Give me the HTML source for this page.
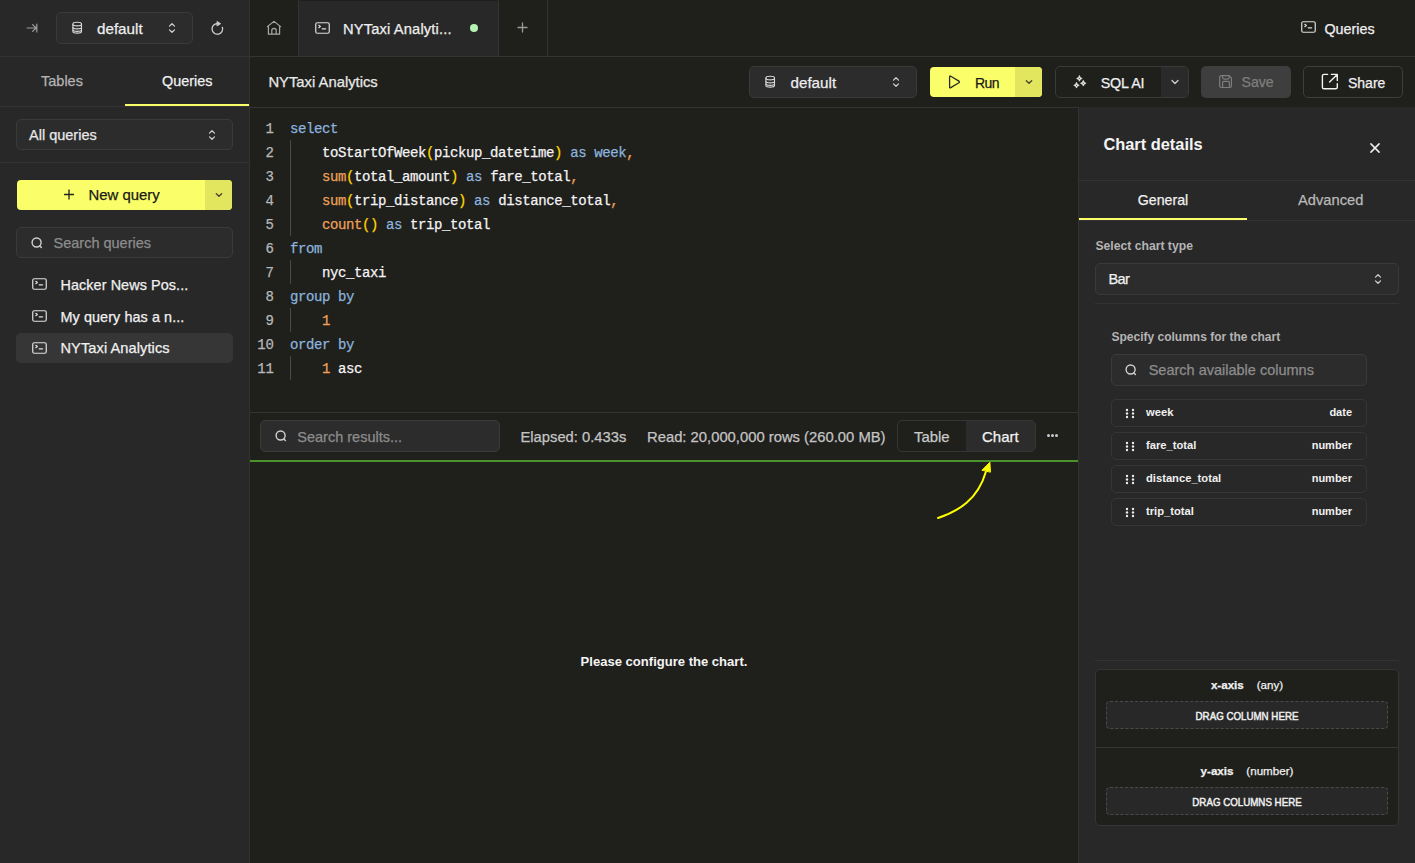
<!DOCTYPE html>
<html><head><meta charset="utf-8"><title>NYTaxi Analytics</title>
<style>
html,body{margin:0;padding:0;width:1415px;height:863px;overflow:hidden;background:#1f1f1c;font-family:"Liberation Sans", sans-serif;}
.r,.t,.i{position:absolute;}
.t{line-height:1;white-space:nowrap;-webkit-text-stroke-width:0.25px;}
</style></head><body>
<div class="r" style="left:0px;top:0px;width:249px;height:863px;background:#282828;"></div>
<div class="r" style="left:249px;top:0px;width:1166px;height:863px;background:#1f1f1c;"></div>
<div class="r" style="left:1078px;top:107px;width:337px;height:756px;background:#282828;"></div>
<div class="r" style="left:1078px;top:107px;width:1px;height:756px;background:#333333;"></div>
<div class="r" style="left:249px;top:0px;width:1px;height:863px;background:#333333;"></div>
<div class="r" style="left:0px;top:56px;width:1415px;height:1px;background:#333333;"></div>
<div class="r" style="left:250px;top:107px;width:828px;height:1px;background:#333333;"></div>
<div class="r" style="left:0px;top:106px;width:249px;height:1px;background:#333333;"></div>
<div class="r" style="left:0px;top:162px;width:249px;height:1px;background:#333333;"></div>
<svg class="i" style="left:20px;top:14px;width:30px;height:28px" viewBox="0 0 30 28" fill="none" stroke="#9e9ea2" stroke-width="1.2" stroke-linecap="round" stroke-linejoin="round"><path d="M7.2 14H16M12.6 10.6L16.2 14L12.6 17.4M16.8 10V18"/></svg>
<div class="r" style="left:56px;top:12px;width:137px;height:32px;background:#2c2c2c;border:1px solid #3a3a3a;box-sizing:border-box;border-radius:5px;"></div>
<svg class="i" style="left:70px;top:20px;width:14px;height:16px" viewBox="0 0 14 16" fill="none" stroke="#d8d8d8" stroke-width="1.1" stroke-linecap="round" stroke-linejoin="round"><path d="M2.9 4C2.9 2.6 4.8 2.3 7.2 2.3C9.6 2.3 11.5 2.6 11.5 4V11.4C11.5 12.8 9.6 13.1 7.2 13.1C4.8 13.1 2.9 12.8 2.9 11.4Z"/><path d="M2.9 4.6C2.9 5.5 4.8 5.9 7.2 5.9C9.6 5.9 11.5 5.5 11.5 4.6M2.9 7.6C2.9 8.5 4.8 8.9 7.2 8.9C9.6 8.9 11.5 8.5 11.5 7.6M2.9 10.1C2.9 11 4.8 11.4 7.2 11.4C9.6 11.4 11.5 11 11.5 10.1"/></svg>
<div class="t" style="left:97px;top:21.13px;font-size:15.2px;color:#eeeeee;font-weight:normal;">default</div>
<svg class="i" style="left:166px;top:21.2px;width:12px;height:14px" viewBox="166 21.2 12 14" fill="none" stroke="#d4d4d4" stroke-width="1.2" stroke-linecap="round" stroke-linejoin="round"><path d="M169.5 26.3L172 23.9L174.5 26.3M169.5 30.099999999999998L172 32.5L174.5 30.099999999999998"/></svg>
<svg class="i" style="left:160px;top:14px;width:70px;height:28px" viewBox="0 0 70 28" fill="none" stroke="#d4d4d4" stroke-width="1.3" stroke-linecap="round" stroke-linejoin="round"><path d="M57.2 9.6A5.3 5.3 0 1 0 62.4 13.3"/><path d="M57.3 7.6L60.6 9.7L57.3 11.8Z" fill="#d4d4d4" stroke-width="0.8"/></svg>
<div class="t" style="left:41px;top:74.23px;font-size:14.5px;color:#b4b4b4;font-weight:normal;">Tables</div>
<div class="t" style="left:162px;top:74.31px;font-size:14.4px;color:#f0f0f0;font-weight:normal;">Queries</div>
<div class="r" style="left:125px;top:104px;width:124px;height:2px;background:#faff69;"></div>
<div class="r" style="left:16px;top:119px;width:217px;height:31px;background:#2c2c2c;border:1px solid #3a3a3a;box-sizing:border-box;border-radius:5px;"></div>
<div class="t" style="left:29px;top:128.03px;font-size:14.5px;color:#e8e8e8;font-weight:normal;">All queries</div>
<svg class="i" style="left:206px;top:128px;width:12px;height:14px" viewBox="206 128 12 14" fill="none" stroke="#d4d4d4" stroke-width="1.2" stroke-linecap="round" stroke-linejoin="round"><path d="M209.5 133.1L212 130.7L214.5 133.1M209.5 136.9L212 139.3L214.5 136.9"/></svg>
<div class="r" style="left:17px;top:180px;width:215px;height:30px;background:#faff69;border-radius:4px;"></div>
<div class="r" style="left:205px;top:180px;width:27px;height:30px;background:#e2e65e;border-radius:0 4px 4px 0;"></div>
<svg class="i" style="left:64px;top:189px;width:10px;height:11px" viewBox="0 0 10 11" fill="none" stroke="#222" stroke-width="1.3" stroke-linecap="round" stroke-linejoin="round"><path d="M5 1v9M0.5 5.5h9"/></svg>
<div class="t" style="left:88.5px;top:188.39px;font-size:14.9px;color:#1a1a1a;font-weight:normal;">New query</div>
<svg class="i" style="left:215px;top:192px;width:8px;height:6px" viewBox="0 0 8 6" fill="none" stroke="#45452f" stroke-width="1.3" stroke-linecap="round" stroke-linejoin="round"><path d="M1.3 1.7l2.7 2.6 2.7-2.6"/></svg>
<div class="r" style="left:16px;top:227px;width:217px;height:31px;background:#2c2c2c;border:1px solid #3a3a3a;box-sizing:border-box;border-radius:5px;"></div>
<svg class="i" style="left:31px;top:237px;width:12px;height:12px" viewBox="0 0 12 12" fill="none" stroke="#d0d0d0" stroke-width="1.4" stroke-linecap="round" stroke-linejoin="round"><circle cx="5.6" cy="5.5" r="4.5"/><path d="M8.9 8.9L10.4 10.4"/></svg>
<div class="t" style="left:53.5px;top:236.13px;font-size:14.5px;color:#8c8c8c;font-weight:normal;">Search queries</div>
<div class="r" style="left:16px;top:333px;width:217px;height:30px;background:#363636;border-radius:5px;"></div>
<svg class="i" style="left:32px;top:278.2px;width:15px;height:12px" viewBox="0 0 15 12" fill="none" stroke="#e0e0e0" stroke-width="1.2" stroke-linecap="round" stroke-linejoin="round"><rect x="0.75" y="0.75" width="13.5" height="10.5" rx="1.5"/><path d="M3.8 3.3L5.4 4.5L3.8 5.7M7.2 6.8H10.6"/></svg>
<div class="t" style="left:60.5px;top:277.51px;font-size:14.4px;color:#f0f0f0;font-weight:normal;letter-spacing:0.08px;">Hacker News Pos...</div>
<svg class="i" style="left:32px;top:310.2px;width:15px;height:12px" viewBox="0 0 15 12" fill="none" stroke="#e0e0e0" stroke-width="1.2" stroke-linecap="round" stroke-linejoin="round"><rect x="0.75" y="0.75" width="13.5" height="10.5" rx="1.5"/><path d="M3.8 3.3L5.4 4.5L3.8 5.7M7.2 6.8H10.6"/></svg>
<div class="t" style="left:60.5px;top:309.51px;font-size:14.4px;color:#f0f0f0;font-weight:normal;letter-spacing:0.08px;">My query has a n...</div>
<svg class="i" style="left:32px;top:342.2px;width:15px;height:12px" viewBox="0 0 15 12" fill="none" stroke="#e0e0e0" stroke-width="1.2" stroke-linecap="round" stroke-linejoin="round"><rect x="0.75" y="0.75" width="13.5" height="10.5" rx="1.5"/><path d="M3.8 3.3L5.4 4.5L3.8 5.7M7.2 6.8H10.6"/></svg>
<div class="t" style="left:60.5px;top:341.34px;font-size:14.6px;color:#f0f0f0;font-weight:normal;letter-spacing:0.08px;">NYTaxi Analytics</div>
<div class="r" style="left:298px;top:0px;width:1px;height:56px;background:#333333;"></div>
<div class="r" style="left:299px;top:1px;width:199px;height:55px;background:#282828;"></div>
<div class="r" style="left:498px;top:0px;width:1px;height:56px;background:#333333;"></div>
<div class="r" style="left:547px;top:0px;width:1px;height:56px;background:#333333;"></div>
<svg class="i" style="left:260px;top:14px;width:30px;height:28px" viewBox="0 0 30 28" fill="none" stroke="#a8a8a8" stroke-width="1.2" stroke-linecap="round" stroke-linejoin="round"><path d="M7.4 12.6L14 7.4L20.6 12.6M8.4 11.8V20.2H19.6V11.8M11.8 20.2V16.5A2.2 2.2 0 0 1 16.2 16.5V20.2"/></svg>
<svg class="i" style="left:315px;top:22px;width:16px;height:13px" viewBox="0 0 16 13" fill="none" stroke="#dedede" stroke-width="1.2" stroke-linecap="round" stroke-linejoin="round"><rect x="0.75" y="0.75" width="13.5" height="10.5" rx="1.5"/><path d="M3.8 3.3L5.4 4.5L3.8 5.7M7.2 6.8H10.6"/></svg>
<div class="t" style="left:343px;top:21.96px;font-size:14.7px;color:#eeeeee;font-weight:normal;letter-spacing:0.15px;">NYTaxi Analyti...</div>
<div class="r" style="left:470px;top:24px;width:8px;height:8px;background:#b7f2b5;border-radius:4px;"></div>
<svg class="i" style="left:517px;top:22px;width:11px;height:11px" viewBox="0 0 11 11" fill="none" stroke="#9a9a9a" stroke-width="1.3" stroke-linecap="round" stroke-linejoin="round"><path d="M5.5 1v9M1 5.5h9"/></svg>
<svg class="i" style="left:1301px;top:21px;width:16px;height:13px" viewBox="0 0 16 13" fill="none" stroke="#dedede" stroke-width="1.2" stroke-linecap="round" stroke-linejoin="round"><rect x="0.75" y="0.75" width="13.5" height="10.5" rx="1.5"/><path d="M3.8 3.3L5.4 4.5L3.8 5.7M7.2 6.8H10.6"/></svg>
<div class="t" style="left:1324.5px;top:22.10px;font-size:14.3px;color:#f0f0f0;font-weight:normal;">Queries</div>
<div class="t" style="left:268.4px;top:75.27px;font-size:14.8px;color:#e8e8e8;font-weight:normal;">NYTaxi Analytics</div>
<div class="r" style="left:749px;top:66px;width:168px;height:32px;background:#2c2c2c;border:1px solid #3a3a3a;box-sizing:border-box;border-radius:5px;"></div>
<svg class="i" style="left:763px;top:74px;width:14px;height:16px" viewBox="0 0 14 16" fill="none" stroke="#d8d8d8" stroke-width="1.1" stroke-linecap="round" stroke-linejoin="round"><path d="M2.9 4C2.9 2.6 4.8 2.3 7.2 2.3C9.6 2.3 11.5 2.6 11.5 4V11.4C11.5 12.8 9.6 13.1 7.2 13.1C4.8 13.1 2.9 12.8 2.9 11.4Z"/><path d="M2.9 4.6C2.9 5.5 4.8 5.9 7.2 5.9C9.6 5.9 11.5 5.5 11.5 4.6M2.9 7.6C2.9 8.5 4.8 8.9 7.2 8.9C9.6 8.9 11.5 8.5 11.5 7.6M2.9 10.1C2.9 11 4.8 11.4 7.2 11.4C9.6 11.4 11.5 11 11.5 10.1"/></svg>
<div class="t" style="left:790.5px;top:74.93px;font-size:15.2px;color:#eeeeee;font-weight:normal;">default</div>
<svg class="i" style="left:890.1px;top:75px;width:12px;height:14px" viewBox="890.1 75 12 14" fill="none" stroke="#d4d4d4" stroke-width="1.2" stroke-linecap="round" stroke-linejoin="round"><path d="M893.6 80.1L896.1 77.7L898.6 80.1M893.6 83.9L896.1 86.3L898.6 83.9"/></svg>
<div class="r" style="left:930px;top:67px;width:112px;height:30px;background:#faff69;border-radius:4px;"></div>
<div class="r" style="left:1015px;top:67px;width:27px;height:30px;background:#e2e65e;border-radius:0 4px 4px 0;"></div>
<svg class="i" style="left:948px;top:74px;width:14px;height:16px" viewBox="0 0 14 16" fill="none" stroke="#2a2a22" stroke-width="1.3" stroke-linecap="round" stroke-linejoin="round"><path d="M1.6 2.8Q1.6 1.5 2.8 2.2L10.9 7.1Q11.9 7.9 10.9 8.7L2.8 13.6Q1.6 14.3 1.6 13Z"/></svg>
<div class="t" style="left:975px;top:76.15px;font-size:14px;color:#1a1a1a;font-weight:normal;letter-spacing:-0.6px;">Run</div>
<svg class="i" style="left:1025px;top:79px;width:8px;height:6px" viewBox="0 0 8 6" fill="none" stroke="#45452f" stroke-width="1.3" stroke-linecap="round" stroke-linejoin="round"><path d="M1.3 1.7l2.7 2.6 2.7-2.6"/></svg>
<div class="r" style="left:1055px;top:66px;width:134px;height:32px;background:#1f1f1c;border:1px solid #3a3a3a;box-sizing:border-box;border-radius:5px;"></div>
<div class="r" style="left:1161px;top:67px;width:27px;height:30px;background:#2a2a2a;border-radius:0 4px 4px 0;"></div>
<svg class="i" style="left:1068px;top:70px;width:24px;height:24px" viewBox="0 0 24 24" fill="none" stroke="#e8e8e8" stroke-width="0.6" stroke-linecap="round" stroke-linejoin="round"><path d="M11.4 5.7Q12.0 7.9 14.2 8.5Q12.0 9.1 11.4 11.3Q10.8 9.1 8.600000000000001 8.5Q10.8 7.9 11.4 5.7Z" fill="#e8e8e8"/><circle cx="11.4" cy="8.5" r="0.5" fill="#1f1f1c" stroke="none"/><path d="M8.5 12.5Q9.1 14.700000000000001 11.3 15.3Q9.1 15.9 8.5 18.1Q7.9 15.9 5.7 15.3Q7.9 14.700000000000001 8.5 12.5Z" fill="#e8e8e8"/><circle cx="8.5" cy="15.3" r="0.5" fill="#1f1f1c" stroke="none"/><path d="M15.3 10.5Q15.9 12.700000000000001 18.1 13.3Q15.9 13.9 15.3 16.1Q14.700000000000001 13.9 12.5 13.3Q14.700000000000001 12.700000000000001 15.3 10.5Z" fill="#e8e8e8"/><circle cx="15.3" cy="13.3" r="0.5" fill="#1f1f1c" stroke="none"/></svg>
<div class="t" style="left:1100.7px;top:76.00px;font-size:14.3px;color:#f0f0f0;font-weight:normal;letter-spacing:-0.2px;">SQL AI</div>
<svg class="i" style="left:1171px;top:79px;width:8px;height:6px" viewBox="0 0 8 6" fill="none" stroke="#d0d0d0" stroke-width="1.3" stroke-linecap="round" stroke-linejoin="round"><path d="M1 1.5l3 3 3-3"/></svg>
<div class="r" style="left:1201px;top:66px;width:90px;height:32px;background:#3e3e3e;border-radius:5px;"></div>
<svg class="i" style="left:1212px;top:70px;width:30px;height:24px" viewBox="0 0 30 24" fill="none" stroke="#7c7c7c" stroke-width="1.2" stroke-linecap="round" stroke-linejoin="round"><path d="M9.2 5.6H17L19.4 8V16A1.5 1.5 0 0 1 17.9 17.5H9.2A1.5 1.5 0 0 1 7.7 16V7.1A1.5 1.5 0 0 1 9.2 5.6Z"/><path d="M10.6 5.6V7.6A1.5 1.5 0 0 0 12.1 9.1H15.6A1.5 1.5 0 0 0 17.1 7.6V5.6M10.6 17.5V12.4A1 1 0 0 1 11.6 11.4H16.4A1 1 0 0 1 17.4 12.4V17.5"/></svg>
<div class="t" style="left:1241.6px;top:75.18px;font-size:14.2px;color:#7e7e7e;font-weight:normal;letter-spacing:-0.1px;">Save</div>
<div class="r" style="left:1303px;top:66px;width:100px;height:32px;background:#1f1f1c;border:1px solid #3e3e3e;box-sizing:border-box;border-radius:5px;"></div>
<svg class="i" style="left:1321px;top:73px;width:18px;height:17px" viewBox="0 0 18 17" fill="none" stroke="#f2f2f2" stroke-width="1.4" stroke-linecap="round" stroke-linejoin="round"><path d="M6.6 1.4H3A1.6 1.6 0 0 0 1.4 3V14.2A1.6 1.6 0 0 0 3 15.8H14.7A1.6 1.6 0 0 0 16.3 14.2V10.6M10.4 1.4H16.3V7.6M16 1.7L8.6 9.1"/></svg>
<div class="t" style="left:1348px;top:76.15px;font-size:14px;color:#f0f0f0;font-weight:normal;">Share</div>
<div class="t" style="right:1141px;top:122.15px;font-size:14px;color:#b8b8b8;font-weight:normal;font-family:'Liberation Mono', monospace;">1</div>
<div class="t" style="left:290px;top:122.15px;font-size:14px;color:#f4f4f4;font-weight:normal;letter-spacing:-0.4px;font-family:'Liberation Mono', monospace;"><span style="color:#8cb4dc">select</span></div>
<div class="t" style="right:1141px;top:146.15px;font-size:14px;color:#b8b8b8;font-weight:normal;font-family:'Liberation Mono', monospace;">2</div>
<div class="t" style="left:290px;top:146.15px;font-size:14px;color:#f4f4f4;font-weight:normal;letter-spacing:-0.4px;font-family:'Liberation Mono', monospace;"><span style="color:#f4f4f4">&nbsp;&nbsp;&nbsp;&nbsp;</span><span style="color:#f4f4f4">toStartOfWeek</span><span style="color:#ffd500">(</span><span style="color:#f4f4f4">pickup_datetime</span><span style="color:#ffd500">)</span><span style="color:#f4f4f4">&nbsp;</span><span style="color:#8cb4dc">as</span><span style="color:#f4f4f4">&nbsp;</span><span style="color:#8cb4dc">week</span><span style="color:#eea15a">,</span></div>
<div class="t" style="right:1141px;top:170.15px;font-size:14px;color:#b8b8b8;font-weight:normal;font-family:'Liberation Mono', monospace;">3</div>
<div class="t" style="left:290px;top:170.15px;font-size:14px;color:#f4f4f4;font-weight:normal;letter-spacing:-0.4px;font-family:'Liberation Mono', monospace;"><span style="color:#f4f4f4">&nbsp;&nbsp;&nbsp;&nbsp;</span><span style="color:#eea15a">sum</span><span style="color:#ffd500">(</span><span style="color:#f4f4f4">total_amount</span><span style="color:#ffd500">)</span><span style="color:#f4f4f4">&nbsp;</span><span style="color:#8cb4dc">as</span><span style="color:#f4f4f4">&nbsp;fare_total</span><span style="color:#eea15a">,</span></div>
<div class="t" style="right:1141px;top:194.15px;font-size:14px;color:#b8b8b8;font-weight:normal;font-family:'Liberation Mono', monospace;">4</div>
<div class="t" style="left:290px;top:194.15px;font-size:14px;color:#f4f4f4;font-weight:normal;letter-spacing:-0.4px;font-family:'Liberation Mono', monospace;"><span style="color:#f4f4f4">&nbsp;&nbsp;&nbsp;&nbsp;</span><span style="color:#eea15a">sum</span><span style="color:#ffd500">(</span><span style="color:#f4f4f4">trip_distance</span><span style="color:#ffd500">)</span><span style="color:#f4f4f4">&nbsp;</span><span style="color:#8cb4dc">as</span><span style="color:#f4f4f4">&nbsp;distance_total</span><span style="color:#eea15a">,</span></div>
<div class="t" style="right:1141px;top:218.15px;font-size:14px;color:#b8b8b8;font-weight:normal;font-family:'Liberation Mono', monospace;">5</div>
<div class="t" style="left:290px;top:218.15px;font-size:14px;color:#f4f4f4;font-weight:normal;letter-spacing:-0.4px;font-family:'Liberation Mono', monospace;"><span style="color:#f4f4f4">&nbsp;&nbsp;&nbsp;&nbsp;</span><span style="color:#eea15a">count</span><span style="color:#ffd500">()</span><span style="color:#f4f4f4">&nbsp;</span><span style="color:#8cb4dc">as</span><span style="color:#f4f4f4">&nbsp;trip_total</span></div>
<div class="t" style="right:1141px;top:242.15px;font-size:14px;color:#b8b8b8;font-weight:normal;font-family:'Liberation Mono', monospace;">6</div>
<div class="t" style="left:290px;top:242.15px;font-size:14px;color:#f4f4f4;font-weight:normal;letter-spacing:-0.4px;font-family:'Liberation Mono', monospace;"><span style="color:#8cb4dc">from</span></div>
<div class="t" style="right:1141px;top:266.15px;font-size:14px;color:#b8b8b8;font-weight:normal;font-family:'Liberation Mono', monospace;">7</div>
<div class="t" style="left:290px;top:266.15px;font-size:14px;color:#f4f4f4;font-weight:normal;letter-spacing:-0.4px;font-family:'Liberation Mono', monospace;"><span style="color:#f4f4f4">&nbsp;&nbsp;&nbsp;&nbsp;nyc_taxi</span></div>
<div class="t" style="right:1141px;top:290.15px;font-size:14px;color:#b8b8b8;font-weight:normal;font-family:'Liberation Mono', monospace;">8</div>
<div class="t" style="left:290px;top:290.15px;font-size:14px;color:#f4f4f4;font-weight:normal;letter-spacing:-0.4px;font-family:'Liberation Mono', monospace;"><span style="color:#8cb4dc">group&nbsp;by</span></div>
<div class="t" style="right:1141px;top:314.15px;font-size:14px;color:#b8b8b8;font-weight:normal;font-family:'Liberation Mono', monospace;">9</div>
<div class="t" style="left:290px;top:314.15px;font-size:14px;color:#f4f4f4;font-weight:normal;letter-spacing:-0.4px;font-family:'Liberation Mono', monospace;"><span style="color:#f4f4f4">&nbsp;&nbsp;&nbsp;&nbsp;</span><span style="color:#eea15a">1</span></div>
<div class="t" style="right:1141px;top:338.15px;font-size:14px;color:#b8b8b8;font-weight:normal;font-family:'Liberation Mono', monospace;">10</div>
<div class="t" style="left:290px;top:338.15px;font-size:14px;color:#f4f4f4;font-weight:normal;letter-spacing:-0.4px;font-family:'Liberation Mono', monospace;"><span style="color:#8cb4dc">order&nbsp;by</span></div>
<div class="t" style="right:1141px;top:362.15px;font-size:14px;color:#b8b8b8;font-weight:normal;font-family:'Liberation Mono', monospace;">11</div>
<div class="t" style="left:290px;top:362.15px;font-size:14px;color:#f4f4f4;font-weight:normal;letter-spacing:-0.4px;font-family:'Liberation Mono', monospace;"><span style="color:#f4f4f4">&nbsp;&nbsp;&nbsp;&nbsp;</span><span style="color:#eea15a">1</span><span style="color:#f4f4f4">&nbsp;asc</span></div>
<div class="r" style="left:290px;top:140px;width:1px;height:96px;background:#4a4a4a;"></div>
<div class="r" style="left:290px;top:260px;width:1px;height:24px;background:#4a4a4a;"></div>
<div class="r" style="left:290px;top:308px;width:1px;height:24px;background:#4a4a4a;"></div>
<div class="r" style="left:290px;top:356px;width:1px;height:24px;background:#4a4a4a;"></div>
<div class="r" style="left:250px;top:412px;width:828px;height:1px;background:#333333;"></div>
<div class="r" style="left:260px;top:420px;width:240px;height:32px;background:#2c2c2c;border:1px solid #3a3a3a;box-sizing:border-box;border-radius:5px;"></div>
<svg class="i" style="left:275px;top:430px;width:12px;height:12px" viewBox="0 0 12 12" fill="none" stroke="#d0d0d0" stroke-width="1.4" stroke-linecap="round" stroke-linejoin="round"><circle cx="5.6" cy="5.5" r="4.5"/><path d="M8.9 8.9L10.4 10.4"/></svg>
<div class="t" style="left:297.3px;top:430.13px;font-size:14.5px;color:#8c8c8c;font-weight:normal;">Search results...</div>
<div class="t" style="left:520.5px;top:430.11px;font-size:14.75px;color:#c4c4c4;font-weight:normal;">Elapsed: 0.433s</div>
<div class="t" style="left:647px;top:430.07px;font-size:14.8px;color:#c4c4c4;font-weight:normal;">Read: 20,000,000 rows (260.00 MB)</div>
<div class="r" style="left:897px;top:420px;width:139px;height:32px;background:#1f1f1c;border:1px solid #363636;box-sizing:border-box;border-radius:5px;"></div>
<div class="r" style="left:966px;top:421px;width:69px;height:30px;background:#2c2c2c;border-radius:0 4px 4px 0;"></div>
<div class="t" style="left:914px;top:429.69px;font-size:14.9px;color:#c8c8c8;font-weight:normal;">Table</div>
<div class="t" style="left:982px;top:428.90px;font-size:15px;color:#f2f2f2;font-weight:normal;">Chart</div>
<div class="r" style="left:1047.0px;top:434.3px;width:3.2000000000000455px;height:3.1999999999999886px;background:#c8c8d0;border-radius:1.6px;"></div>
<div class="r" style="left:1050.8px;top:434.3px;width:3.2000000000000455px;height:3.1999999999999886px;background:#c8c8d0;border-radius:1.6px;"></div>
<div class="r" style="left:1054.6px;top:434.3px;width:3.2000000000000455px;height:3.1999999999999886px;background:#c8c8d0;border-radius:1.6px;"></div>
<div class="r" style="left:250px;top:460px;width:828px;height:2px;background:#4a922b;"></div>
<svg class="i" style="left:930px;top:455px;width:70px;height:70px" viewBox="930 455 70 70" fill="none" stroke="#ffff00" stroke-width="2" stroke-linecap="round"><path d="M938 518C959 511 978 499 985.8 472"/><path d="M982.2 470L989.9 462.3L990.4 471.8Z" fill="#ffff00" stroke-width="1"/></svg>
<div class="t" style="left:464px;width:400px;text-align:center;top:655.05px;font-size:13.05px;color:#f4f4f4;font-weight:bold;-webkit-text-stroke-width:0;">Please configure the chart.</div>
<div class="t" style="left:1103.4px;top:136.32px;font-size:16.4px;color:#f4f4f4;font-weight:bold;-webkit-text-stroke-width:0;">Chart details</div>
<svg class="i" style="left:1369px;top:142px;width:12px;height:12px" viewBox="0 0 12 12" fill="none" stroke="#f0f0f0" stroke-width="1.5" stroke-linecap="round" stroke-linejoin="round"><path d="M1.9 1.9L10.1 10.1M10.1 1.9L1.9 10.1"/></svg>
<div class="r" style="left:1078px;top:180px;width:337px;height:1px;background:#333333;"></div>
<div class="t" style="left:1137.8px;top:192.98px;font-size:14.2px;color:#f0f0f0;font-weight:normal;">General</div>
<div class="t" style="left:1298px;top:193.16px;font-size:14.7px;color:#b8b8b8;font-weight:normal;">Advanced</div>
<div class="r" style="left:1078px;top:220px;width:337px;height:1px;background:#333333;"></div>
<div class="r" style="left:1079px;top:218px;width:168px;height:2px;background:#faff69;"></div>
<div class="t" style="left:1095.4px;top:239.97px;font-size:12.2px;color:#b4b4b4;font-weight:bold;-webkit-text-stroke-width:0;">Select chart type</div>
<div class="r" style="left:1095px;top:263px;width:304px;height:32px;background:#2c2c2c;border:1px solid #3a3a3a;box-sizing:border-box;border-radius:5px;"></div>
<div class="t" style="left:1108.4px;top:272.04px;font-size:14.6px;color:#f0f0f0;font-weight:normal;letter-spacing:-0.6px;">Bar</div>
<svg class="i" style="left:1371.8px;top:272.1px;width:12px;height:14px" viewBox="1371.8 272.1 12 14" fill="none" stroke="#d4d4d4" stroke-width="1.2" stroke-linecap="round" stroke-linejoin="round"><path d="M1375.3 277.20000000000005L1377.8 274.8L1380.3 277.20000000000005M1375.3 281.0L1377.8 283.40000000000003L1380.3 281.0"/></svg>
<div class="r" style="left:1095px;top:303px;width:304px;height:1px;background:#333333;"></div>
<div class="t" style="left:1111.5px;top:331.34px;font-size:12px;color:#b4b4b4;font-weight:bold;-webkit-text-stroke-width:0;">Specify columns for the chart</div>
<div class="r" style="left:1111px;top:354px;width:256px;height:32px;background:#2c2c2c;border:1px solid #3a3a3a;box-sizing:border-box;border-radius:5px;"></div>
<svg class="i" style="left:1125px;top:364px;width:12px;height:12px" viewBox="0 0 12 12" fill="none" stroke="#d0d0d0" stroke-width="1.4" stroke-linecap="round" stroke-linejoin="round"><circle cx="5.6" cy="5.5" r="4.5"/><path d="M8.9 8.9L10.4 10.4"/></svg>
<div class="t" style="left:1148.7px;top:363.03px;font-size:14.5px;color:#8c8c8c;font-weight:normal;">Search available columns</div>
<div class="r" style="left:1111px;top:399px;width:256px;height:28px;background:#282828;border:1px solid #363636;box-sizing:border-box;border-radius:5px;"></div>
<svg class="i" style="left:1125px;top:407.5px;width:10px;height:11px" viewBox="0 0 10 11" fill="#ececec"><circle cx="2" cy="2.0" r="1.2"/><circle cx="8" cy="2.0" r="1.2"/><circle cx="2" cy="5.5" r="1.2"/><circle cx="8" cy="5.5" r="1.2"/><circle cx="2" cy="9.0" r="1.2"/><circle cx="8" cy="9.0" r="1.2"/></svg>
<div class="t" style="left:1146px;top:406.82px;font-size:11.2px;color:#f0f0f0;font-weight:bold;-webkit-text-stroke-width:0;">week</div>
<div class="t" style="right:63px;top:406.99px;font-size:11px;color:#f0f0f0;font-weight:bold;-webkit-text-stroke-width:0;">date</div>
<div class="r" style="left:1111px;top:432px;width:256px;height:28px;background:#282828;border:1px solid #363636;box-sizing:border-box;border-radius:5px;"></div>
<svg class="i" style="left:1125px;top:440.5px;width:10px;height:11px" viewBox="0 0 10 11" fill="#ececec"><circle cx="2" cy="2.0" r="1.2"/><circle cx="8" cy="2.0" r="1.2"/><circle cx="2" cy="5.5" r="1.2"/><circle cx="8" cy="5.5" r="1.2"/><circle cx="2" cy="9.0" r="1.2"/><circle cx="8" cy="9.0" r="1.2"/></svg>
<div class="t" style="left:1146px;top:439.82px;font-size:11.2px;color:#f0f0f0;font-weight:bold;-webkit-text-stroke-width:0;">fare_total</div>
<div class="t" style="right:63px;top:439.99px;font-size:11px;color:#f0f0f0;font-weight:bold;-webkit-text-stroke-width:0;">number</div>
<div class="r" style="left:1111px;top:465px;width:256px;height:28px;background:#282828;border:1px solid #363636;box-sizing:border-box;border-radius:5px;"></div>
<svg class="i" style="left:1125px;top:473.5px;width:10px;height:11px" viewBox="0 0 10 11" fill="#ececec"><circle cx="2" cy="2.0" r="1.2"/><circle cx="8" cy="2.0" r="1.2"/><circle cx="2" cy="5.5" r="1.2"/><circle cx="8" cy="5.5" r="1.2"/><circle cx="2" cy="9.0" r="1.2"/><circle cx="8" cy="9.0" r="1.2"/></svg>
<div class="t" style="left:1146px;top:472.82px;font-size:11.2px;color:#f0f0f0;font-weight:bold;-webkit-text-stroke-width:0;">distance_total</div>
<div class="t" style="right:63px;top:472.99px;font-size:11px;color:#f0f0f0;font-weight:bold;-webkit-text-stroke-width:0;">number</div>
<div class="r" style="left:1111px;top:498px;width:256px;height:28px;background:#282828;border:1px solid #363636;box-sizing:border-box;border-radius:5px;"></div>
<svg class="i" style="left:1125px;top:506.5px;width:10px;height:11px" viewBox="0 0 10 11" fill="#ececec"><circle cx="2" cy="2.0" r="1.2"/><circle cx="8" cy="2.0" r="1.2"/><circle cx="2" cy="5.5" r="1.2"/><circle cx="8" cy="5.5" r="1.2"/><circle cx="2" cy="9.0" r="1.2"/><circle cx="8" cy="9.0" r="1.2"/></svg>
<div class="t" style="left:1146px;top:505.82px;font-size:11.2px;color:#f0f0f0;font-weight:bold;-webkit-text-stroke-width:0;">trip_total</div>
<div class="t" style="right:63px;top:505.99px;font-size:11px;color:#f0f0f0;font-weight:bold;-webkit-text-stroke-width:0;">number</div>
<div class="r" style="left:1095px;top:660px;width:304px;height:1px;background:#333333;"></div>
<div class="r" style="left:1095px;top:669px;width:304px;height:157px;background:#1f1f1c;border:1px solid #353535;box-sizing:border-box;border-radius:5px;"></div>
<div class="r" style="left:1096px;top:747px;width:302px;height:1px;background:#353535;"></div>
<div class="t" style="left:1096px;top:679px;width:302px;text-align:center;font-size:11.6px;line-height:12px;color:#f0f0f0"><b>x-axis</b>&nbsp;&nbsp;&nbsp;&nbsp;(any)</div>
<div class="r" style="left:1106px;top:701px;width:282px;height:28px;background:#282828;border-radius:4px;border:1px dashed #4a4a4a;box-sizing:border-box;"></div>
<div class="t" style="left:1106px;top:709px;width:282px;text-align:center;font-size:10.6px;line-height:14px;color:#f0f0f0;-webkit-text-stroke-width:0.45px;transform:scaleX(0.92)">DRAG COLUMN HERE</div>
<div class="t" style="left:1096px;top:765px;width:302px;text-align:center;font-size:11.6px;line-height:12px;color:#f0f0f0"><b>y-axis</b>&nbsp;&nbsp;&nbsp;&nbsp;(number)</div>
<div class="r" style="left:1106px;top:787px;width:282px;height:28px;background:#282828;border-radius:4px;border:1px dashed #4a4a4a;box-sizing:border-box;"></div>
<div class="t" style="left:1106px;top:795px;width:282px;text-align:center;font-size:10.6px;line-height:14px;color:#f0f0f0;-webkit-text-stroke-width:0.45px;transform:scaleX(0.92)">DRAG COLUMNS HERE</div>
</body></html>
